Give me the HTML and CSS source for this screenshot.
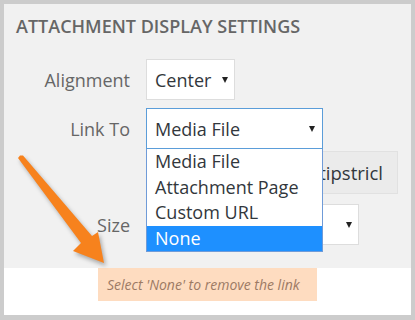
FILE: index.html
```html
<!DOCTYPE html>
<html>
<head>
<meta charset="utf-8">
<link rel="stylesheet" href="styles.css">
</head>
<body>
<div class="frame">
  <div class="panel">
    <h2 class="title">Attachment Display Settings</h2>
    <div class="row">
      <span class="label">Alignment</span>
      <div class="select select-align"><span>Center</span><i class="caret"></i></div>
    </div>
    <div class="row row-link">
      <span class="label">Link To</span>
      <div class="select select-link"><span>Media File</span><i class="caret"></i></div>
    </div>
    <div class="row row-url">
      <span class="label"></span>
      <div class="url"><span>http://www.smartipstricl</span></div>
    </div>
    <div class="row row-size">
      <span class="label">Size</span>
      <div class="select select-size"><span></span><i class="caret"></i></div>
    </div>
    <ul class="dropdown">
      <li>Media File</li>
      <li>Attachment Page</li>
      <li>Custom URL</li>
      <li class="active">None</li>
    </ul>
  </div>
  <div class="note-area">
    <div class="note">Select 'None' to remove the link</div>
  </div>
  <svg class="arrow" width="415" height="320" viewBox="0 0 415 320">
    <polygon points="18,158 20,155.5 23,155.5 92,236 98,232 104,263 73,251 81,243" fill="#f7821d"/>
  </svg>
</div>
</body>
</html>
```
FILE: styles.css
```css
* { box-sizing: border-box; }
html, body { margin: 0; padding: 0; }
body {
  width: 415px;
  height: 320px;
  font-family: "Open Sans", "Noto Sans", sans-serif;
  background: #ccc;
}
.frame {
  position: relative;
  width: 415px;
  height: 320px;
  border: 4px solid #cccccc;
  border-bottom-width: 5px;
  background: #fff;
}
.panel {
  background: #f1f1f1;
  height: 264px;
  padding: 10px 12px 0 12px;
}
.title {
  margin: 0 0 21px 0;
  font-size: 18px;
  line-height: 24px;
  font-weight: 600;
  text-transform: uppercase;
  color: #666;
}
.row {
  display: flex;
  align-items: center;
  gap: 16px;
}
.row-link { margin-top: 8px; }
.row-url { margin-top: 2px; }
.row-size { margin-top: 10px; }
.label {
  width: 114px;
  flex: none;
  text-align: right;
  font-size: 18px;
  color: #666;
}
.select {
  display: flex;
  align-items: center;
  justify-content: space-between;
  height: 41px;
  background: #fff;
  border: 1px solid #ddd;
  padding: 0 6px 0 8px;
  font-size: 18px;
  color: #32373c;
}
.select-align { width: 89px; }
.select-link { width: 177px; border-color: #5b9dd9; padding-right: 7px; }
.select-size { width: 213px; }
.caret {
  width: 0;
  height: 0;
  border-left: 3px solid transparent;
  border-right: 3px solid transparent;
  border-top: 6px solid #222;
}
.url {
  width: 252px;
  height: 43px;
  background: #ebebeb;
  border: 1px solid #e1e1e1;
  display: flex;
  align-items: center;
  justify-content: flex-end;
  overflow: hidden;
  white-space: nowrap;
  padding-right: 14px;
  font-size: 18.5px;
  color: #32373c;
}
.dropdown {
  position: absolute;
  left: 142px;
  top: 145px;
  width: 177px;
  margin: 0;
  padding: 0;
  list-style: none;
  background: #fff;
  border: 1px solid #6f9bd8;
  border-top: none;
}
.dropdown li {
  height: 25.5px;
  line-height: 25px;
  padding-left: 8px;
  font-size: 18px;
  color: #32373c;
}
.dropdown li.active {
  background: #1e90ff;
  color: #fff;
}
.note-area {
  padding-left: 94px;
}
.note {
  width: 219px;
  height: 33px;
  background: #fedcc0;
  padding-left: 9px;
  line-height: 33px;
  font-size: 14px;
  font-style: italic;
  color: #9c7a64;
}
.arrow {
  position: absolute;
  left: -4px;
  top: -4px;
  filter: drop-shadow(2px 3px 2px rgba(0,0,0,0.3));
}
```
